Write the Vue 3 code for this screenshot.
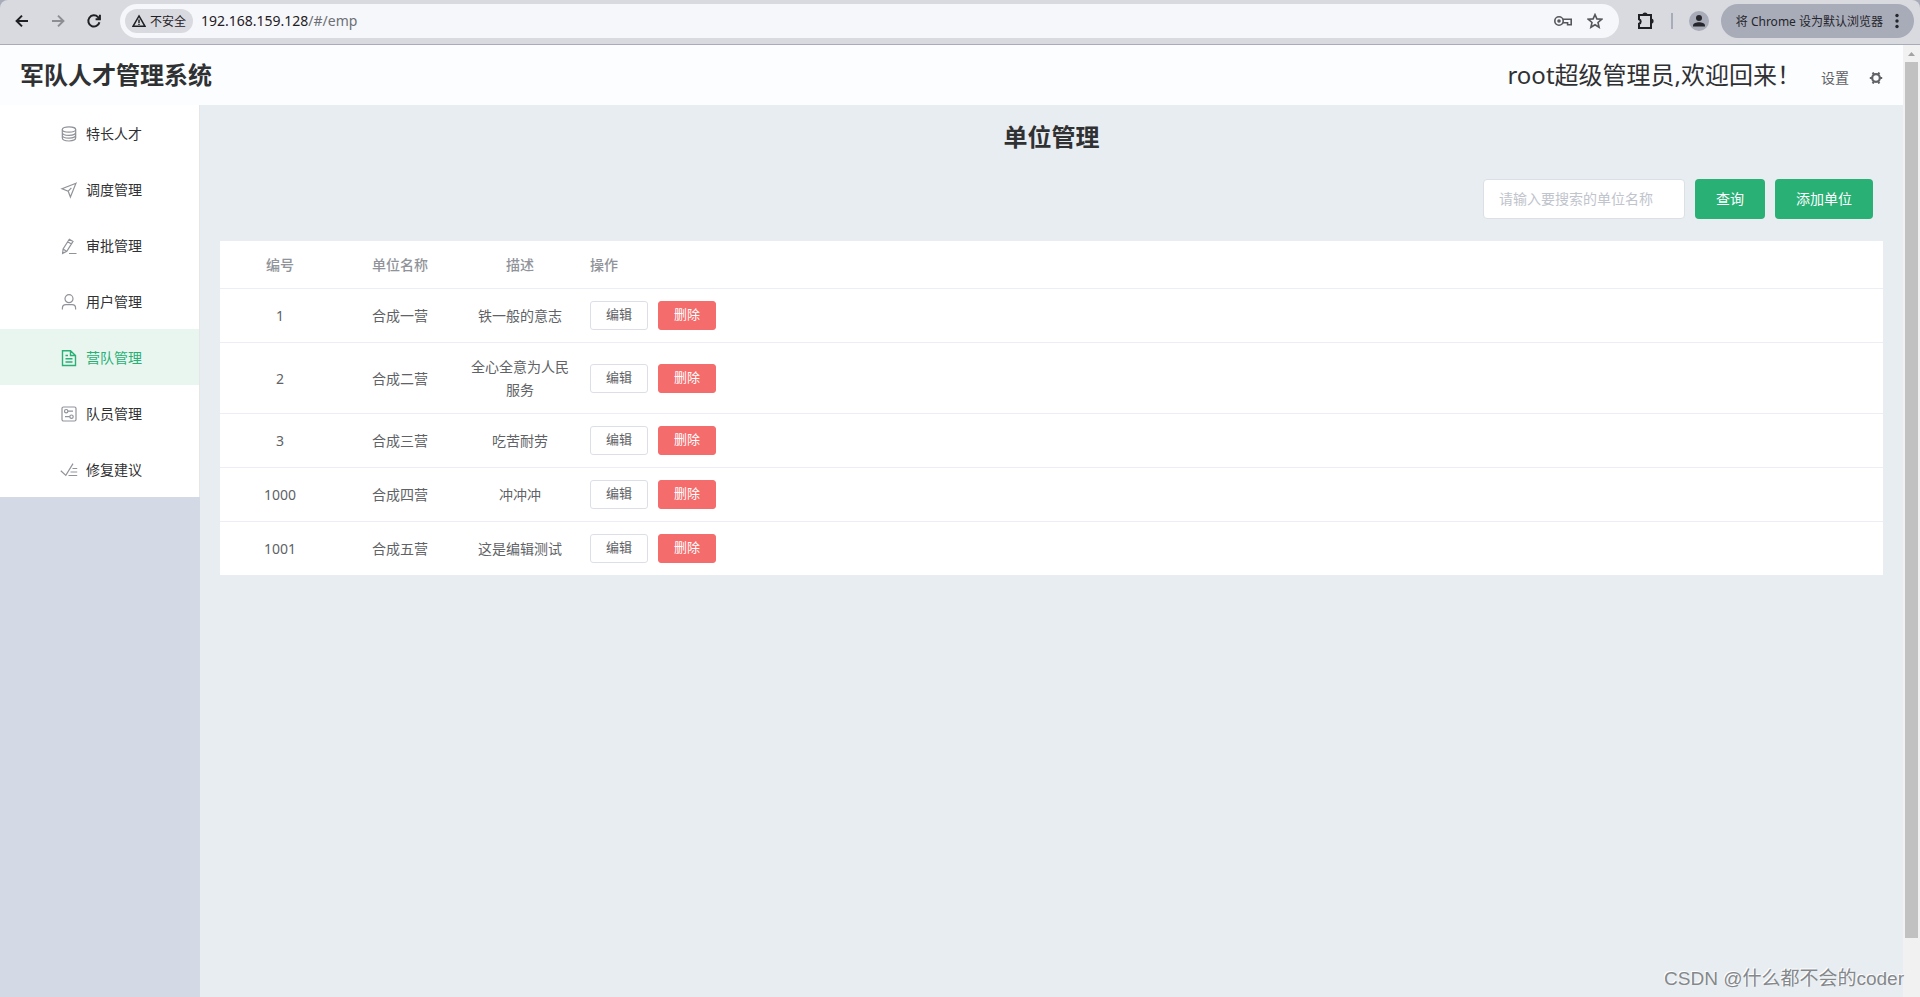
<script setup>
import { ref } from 'vue'

const keyword = ref('')
const active = ref('营队管理')

const menu = [
  { name: '特长人才', icon: 'coin' },
  { name: '调度管理', icon: 'position' },
  { name: '审批管理', icon: 'edit' },
  { name: '用户管理', icon: 'user' },
  { name: '营队管理', icon: 'document' },
  { name: '队员管理', icon: 'setup' },
  { name: '修复建议', icon: 'finished' }
]

const rows = [
  { id: 1, name: '合成一营', desc: '铁一般的意志' },
  { id: 2, name: '合成二营', desc: '全心全意为人民服务' },
  { id: 3, name: '合成三营', desc: '吃苦耐劳' },
  { id: 1000, name: '合成四营', desc: '冲冲冲' },
  { id: 1001, name: '合成五营', desc: '这是编辑测试' }
]
</script>

<template>
  <div class="window">
    <div class="toolbar-back">
      <div class="toolbar">
        <button class="nav" aria-label="后退">
          <svg width="16" height="16" viewBox="0 0 16 16"><path d="M14 8H3M8 2.6 2.6 8 8 13.4" /></svg>
        </button>
        <button class="nav dim" aria-label="前进">
          <svg width="16" height="16" viewBox="0 0 16 16"><path d="M2 8h11M8 2.6 13.4 8 8 13.4" /></svg>
        </button>
        <button class="nav" aria-label="重新加载">
          <svg width="16" height="16" viewBox="0 0 16 16"><path d="M13.4 9.2A5.6 5.6 0 1 1 12 4.1l1.6 1.7M13.9 1.8v4.4H9.6" /></svg>
        </button>
        <div class="omnibox">
          <button class="chip">
            <svg width="14" height="14" viewBox="0 0 14 14"><path d="M7 1.9 13 12.3H1Z" /><path d="M7 5.6v3.3M7 9.8v1.2" /></svg>
            <span>不安全</span>
          </button>
          <span class="url">192.168.159.128<span class="path">/#/emp</span></span>
          <button class="plain" aria-label="密码">
            <svg width="20" height="14" viewBox="0 0 20 14"><circle cx="6" cy="7" r="4.2" /><circle cx="6" cy="7" r="1" class="solid" /><path d="M10 5.2h8.2v5.6h-3.600V8.800H10" /></svg>
          </button>
          <button class="plain" aria-label="收藏">
            <svg width="16" height="16" viewBox="0 0 16 16"><path d="m8 1.6 1.9 4.3 4.7.4L11 9.5l1.1 4.7L8 11.7l-4.1 2.5L5 9.5 1.4 6.3l4.7-.4Z" /></svg>
          </button>
        </div>
        <button class="nav ext" aria-label="扩展程序">
          <svg width="18" height="18" viewBox="0 0 18 18"><path d="M2 3h12v13H2v-4.200a2.400 2.400 0 0 0 0-4.600Z" /><path d="M6.400 3a1.600 1.600 0 0 1 3.200 0ZM14 7.400a1.600 1.600 0 0 1 0 3.200Z" class="ink" /></svg>
        </button>
        <span class="bar"></span>
        <button class="avatar" aria-label="个人资料">
          <svg width="20" height="20" viewBox="0 0 20 20"><circle cx="10" cy="7" r="3" /><path d="M4 15.5v-1c0-2 3.4-3.2 6-3.2s6 1.2 6 3.2v1Z" /></svg>
        </button>
        <button class="pill">
          <span>将 Chrome 设为默认浏览器</span>
          <svg width="4" height="16" viewBox="0 0 4 16"><circle cx="2" cy="2.5" r="1.7" /><circle cx="2" cy="8" r="1.7" /><circle cx="2" cy="13.5" r="1.7" /></svg>
        </button>
      </div>
    </div>

    <div class="viewport">
      <div class="page">
        <header class="header">
          <h1>军队人才管理系统</h1>
          <span class="welcome">root超级管理员,欢迎回来！</span>
          <button class="settings">
            <span>设置</span>
            <svg width="14" height="14" viewBox="0 0 14 14"><circle cx="7" cy="7" r="3.8" /><path d="M4.700 3.300 3.700 1.500M9.300 3.300l1-1.800M11 7h2.200M3 7H.8M4.700 10.700l-1 1.800M9.300 10.700l1 1.800" /></svg>
          </button>
        </header>

        <div class="body">
          <aside class="aside">
            <nav class="menu">
              <a
                v-for="m in menu"
                :key="m.name"
                href="#/emp"
                :class="{ active: m.name === active }"
                @click.prevent="active = m.name"
              >
                <svg width="18" height="18" viewBox="0 0 18 18">
                  <template v-if="m.icon === 'coin'">
                    <ellipse cx="9" cy="4.500" rx="6.700" ry="2.700" />
                    <path d="M2.300 7.200c0 1.900 3 3.200 6.700 3.200s6.700-1.300 6.700-3.200M2.300 10c0 1.900 3 3.200 6.700 3.200s6.700-1.300 6.700-3.200M2.300 4.500v8.300c0 1.900 3 3.200 6.700 3.200s6.700-1.300 6.700-3.200V4.500" />
                  </template>
                  <path v-else-if="m.icon === 'position'" d="M16 2.200 2 7.800l6.200 2.400L10.400 16ZM8.200 10.200l3.200-3.400" />
                  <path v-else-if="m.icon === 'edit'" d="M9.300 2.200 13 4.400 6.800 14.400l-4.200 2 .5-4.400ZM7.700 4.700l3.700 2.200M3.100 12l3.700 2.400M9 16.500h7.500" />
                  <template v-else-if="m.icon === 'user'">
                    <circle cx="9" cy="5.700" r="4" />
                    <path d="M2.400 16.500v-1.300c0-2.200 1.500-3.500 3.500-3.500h6.200c2 0 3.500 1.300 3.500 3.500v1.300" />
                  </template>
                  <path v-else-if="m.icon === 'document'" d="M10.500 1.800H2.500v14.700h13V6.500ZM10.500 1.800v4.700h5M5.500 6.500h2.500M5.500 9.800h7M5.500 13h7" />
                  <template v-else-if="m.icon === 'setup'">
                    <rect x="2" y="2" width="14" height="14" rx="1.500" />
                    <circle cx="6.200" cy="6.200" r="1.700" />
                    <circle cx="11.500" cy="11.700" r="1.700" />
                    <path d="M7.900 6.200H13M5 11.700h4.800" />
                  </template>
                  <path v-else d="m.8 9.700 5 4.700L13 2.600M12.500 7.500h4.700M10.500 11h6.700M8.500 14.500h8.700" />
                </svg>
                <span>{{ m.name }}</span>
              </a>
            </nav>
          </aside>

          <main class="main">
            <h2>单位管理</h2>
            <form class="search" @submit.prevent>
              <input v-model="keyword" type="text" aria-label="单位名称" placeholder="请输入要搜索的单位名称" />
              <button class="primary" type="submit">查询</button>
              <button class="primary" type="button">添加单位</button>
            </form>
            <table class="table">
              <colgroup>
                <col class="narrow" />
                <col class="narrow" />
                <col class="narrow" />
                <col />
              </colgroup>
              <thead>
                <tr>
                  <th>编号</th>
                  <th>单位名称</th>
                  <th>描述</th>
                  <th class="left">操作</th>
                </tr>
              </thead>
              <tbody>
                <tr v-for="r in rows" :key="r.id">
                  <td>{{ r.id }}</td>
                  <td>{{ r.name }}</td>
                  <td>{{ r.desc }}</td>
                  <td class="left">
                    <div class="ops">
                      <button class="mini">编辑</button>
                      <button class="mini danger">删除</button>
                    </div>
                  </td>
                </tr>
              </tbody>
            </table>
          </main>
        </div>
      </div>
      <div class="scrollbar">
        <svg width="17" height="17" viewBox="0 0 17 17"><path d="M5 11h7L8.5 7Z" /></svg>
        <div class="thumb"></div>
      </div>
    </div>
    <div class="watermark">CSDN @什么都不会的coder</div>
  </div>
</template>

<style>
body {
  margin: 0;
  overflow: hidden;
}
</style>

<style scoped>
.window {
  position: relative;
  height: 100vh;
  display: flex;
  flex-direction: column;
  font-family: "Noto Sans", "Noto Sans CJK SC", sans-serif;
  font-size: 14px;
  color: #303133;
}
.window * {
  box-sizing: border-box;
}
button,
input {
  font: inherit;
  color: inherit;
  margin: 0;
  padding: 0;
  border: 0;
  background: none;
}
svg {
  display: block;
  flex: none;
  fill: none;
  stroke: currentColor;
}

.toolbar-back {
  background: #a8abb8;
}
.toolbar {
  height: 45px;
  padding: 0 6px 2px 14px;
  display: flex;
  align-items: center;
  background: #d9dadf;
  border-bottom: 1px solid #a8abb8;
  border-radius: 8px 8px 0 0;
}
.nav {
  width: 16px;
  margin-right: 20px;
  color: #1f2024;
}
.nav svg {
  stroke-width: 2;
}
.dim {
  color: #8c8e94;
}
.omnibox {
  flex: 1;
  height: 34px;
  padding: 0 16px 0 5px;
  display: flex;
  align-items: center;
  border-radius: 17px;
  background: #f6f7fa;
  margin-left: -2px;
}
.chip {
  width: 68px;
  height: 24px;
  display: flex;
  align-items: center;
  justify-content: center;
  gap: 4px;
  border-radius: 12px;
  background: #d9dadf;
  color: #1f2024;
  font-size: 12px;
}
.chip svg {
  stroke-width: 1.5;
}
.url {
  flex: 1;
  padding: 0 0 2px 8px;
  color: #1f2024;
}
.path {
  color: #6d6f75;
}
.plain {
  margin-left: 14px;
  color: #55575d;
}
.plain svg {
  stroke-width: 1.6;
}
.solid,
.ink {
  fill: currentColor;
}
.ext {
  width: 18px;
  margin: 0 16px 0 18px;
}
.bar {
  width: 2px;
  height: 16px;
  background: #a8abb8;
}
.avatar {
  margin: 0 12px 0 16px;
  border-radius: 50%;
  background: #a8abb8;
}
.avatar svg,
.pill svg {
  fill: #25262b;
  stroke: none;
}
.pill {
  height: 34px;
  padding: 0 15px;
  display: flex;
  align-items: center;
  gap: 12px;
  border-radius: 17px;
  background: #a8abb8;
  color: #25262b;
  font-size: 12px;
  white-space: nowrap;
}

.viewport {
  flex: 1;
  min-height: 0;
  display: flex;
}
.page {
  flex: 1;
  min-width: 0;
  display: flex;
  flex-direction: column;
}
.header {
  height: 60px;
  padding: 0 20px;
  display: flex;
  align-items: center;
  background: #fcfdff;
  line-height: 60px;
}
h1 {
  flex: 1;
  margin: 0;
  font-size: 24px;
  font-weight: 700;
}
.welcome {
  font-size: 24px;
}
.settings {
  display: flex;
  align-items: center;
  gap: 20px;
  margin-left: 20px;
  padding-top: 6px;
  line-height: 20px;
  color: #606266;
}
.settings svg {
  stroke-width: 2.2;
}
.body {
  flex: 1;
  display: flex;
}
.aside {
  width: 200px;
  background: #d3dae5;
}
.menu {
  border-right: 1px solid #e6e6e6;
  background: #fff;
}
.menu a {
  height: 56px;
  padding-left: 60px;
  display: flex;
  align-items: center;
  gap: 8px;
  color: #303133;
  text-decoration: none;
}
.menu svg {
  margin-top: 2px;
  color: #909399;
  stroke-width: 1.2;
}
.menu .active {
  background: #e9f6f0;
  color: #28b075;
}
.menu .active svg {
  color: #28b075;
  stroke-width: 1.4;
}
.main {
  flex: 1;
  min-width: 0;
  padding: 14px 20px;
  background: #e8edf1;
}
h2 {
  margin: 0;
  font-size: 24px;
  line-height: 36px;
  font-weight: 700;
  text-align: center;
}
.search {
  display: flex;
  justify-content: flex-end;
  gap: 10px;
  padding: 24px 10px 22px;
}
.search input {
  width: 202px;
  height: 40px;
  padding: 0 15px 2px;
  border: 1px solid #dcdfe6;
  border-radius: 4px;
  background: #fff;
}
.search input::placeholder {
  color: #c0c4cc;
}
.primary {
  height: 40px;
  padding: 0 21px 2px;
  border-radius: 4px;
  background: #28b075;
  color: #fff;
}
.table {
  width: 100%;
  table-layout: fixed;
  border-collapse: separate;
  border-spacing: 0;
  background: #fff;
  color: #606266;
  line-height: 23px;
}
.narrow {
  width: 120px;
}
th,
td {
  padding: 12px 10px;
  border-bottom: 1px solid #ebeef5;
  text-align: center;
}
th {
  color: #909399;
  font-weight: 500;
}
tbody tr:last-child td {
  border-bottom: 0;
}
.left {
  text-align: left;
}
.ops {
  display: flex;
  gap: 10px;
}
.mini {
  width: 58px;
  height: 29px;
  padding-bottom: 2px;
  border: 1px solid #dcdfe6;
  border-radius: 3px;
  background: #fff;
  font-size: 13px;
  line-height: 13px;
}
.danger {
  border-color: #f56c6c;
  background: #f56c6c;
  color: #fff;
}
.scrollbar {
  width: 17px;
  background: #f1f1f1;
}
.scrollbar svg {
  fill: #a3a3a3;
  stroke: none;
}
.thumb {
  height: 92%;
  margin: 0 2px;
  background: #c1c1c1;
}
.watermark {
  position: absolute;
  right: 16px;
  bottom: 4px;
  font-family: "Liberation Sans", "Noto Sans CJK SC", sans-serif;
  font-size: 19px;
  line-height: 28px;
  color: #85888b;
  text-shadow: -1px -1px 0 #fff;
}
</style>
